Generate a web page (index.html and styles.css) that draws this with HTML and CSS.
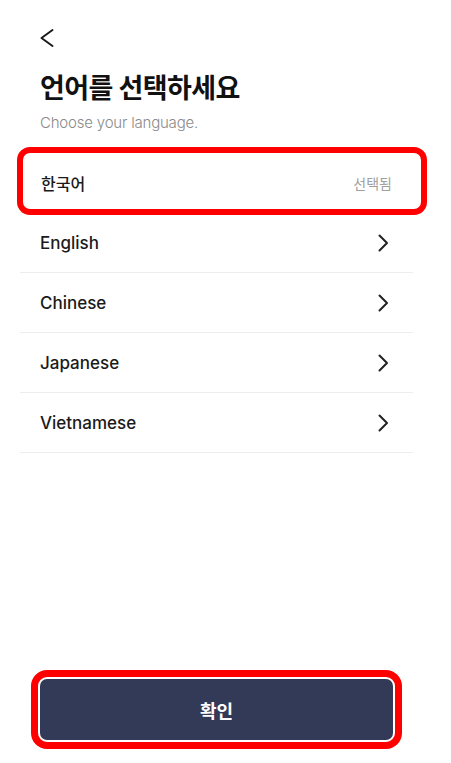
FILE: index.html
```html
<!DOCTYPE html>
<html lang="ko">
<head>
<meta charset="utf-8">
<title>언어 선택</title>
<link rel="stylesheet" href="styles.css">
</head>
<body>
<div class="page">
  <header class="header">
    <button class="back" aria-label="뒤로">
      <svg width="16" height="20" viewBox="0 0 16 20"><path d="M13.5 2 L2.5 10 L13.5 18" fill="none" stroke="#1a1a1a" stroke-width="2" stroke-linecap="round" stroke-linejoin="round"/></svg>
    </button>
  </header>
  <h1 class="title">언어를 선택하세요</h1>
  <p class="subtitle">Choose your language.</p>
  <div class="list">
    <div class="row row-selected">
      <span class="label label-ko">한국어</span>
      <span class="status">선택됨</span>
    </div>
    <div class="row">
      <span class="label">English</span>
      <svg class="chev" width="12" height="18" viewBox="0 0 12 18"><path d="M2.5 1.5 L10 9 L2.5 16.5" fill="none" stroke="#222" stroke-width="2" stroke-linecap="round" stroke-linejoin="round"/></svg>
    </div>
    <div class="row">
      <span class="label">Chinese</span>
      <svg class="chev" width="12" height="18" viewBox="0 0 12 18"><path d="M2.5 1.5 L10 9 L2.5 16.5" fill="none" stroke="#222" stroke-width="2" stroke-linecap="round" stroke-linejoin="round"/></svg>
    </div>
    <div class="row">
      <span class="label">Japanese</span>
      <svg class="chev" width="12" height="18" viewBox="0 0 12 18"><path d="M2.5 1.5 L10 9 L2.5 16.5" fill="none" stroke="#222" stroke-width="2" stroke-linecap="round" stroke-linejoin="round"/></svg>
    </div>
    <div class="row">
      <span class="label">Vietnamese</span>
      <svg class="chev" width="12" height="18" viewBox="0 0 12 18"><path d="M2.5 1.5 L10 9 L2.5 16.5" fill="none" stroke="#222" stroke-width="2" stroke-linecap="round" stroke-linejoin="round"/></svg>
    </div>
    <div class="highlight"></div>
  </div>
  <footer class="footer">
    <button class="confirm">확인</button>
  </footer>
</div>
</body>
</html>
```

FILE: styles.css
```css
* { box-sizing: border-box; }
html, body { margin: 0; padding: 0; background: #fff; }
body {
  font-family: Inter, "Noto Sans CJK KR", sans-serif;
  color: #1a1a1a;
}
.page {
  display: flex;
  flex-direction: column;
  min-height: 763px;
}
.header {
  padding: 28px 0 0 39px;
  height: 71px;
}
.back {
  display: block;
  padding: 0;
  border: 0;
  background: none;
  width: 16px;
  height: 20px;
}
.back svg { display: block; }
.title {
  margin: 0 0 0 40px;
  font-size: 27px;
  line-height: 35px;
  font-weight: 700;
  letter-spacing: -0.6px;
  color: #111;
}
.subtitle {
  margin: 7px 0 0 40px;
  font-size: 15px;
  line-height: 20px;
  font-weight: 300;
  letter-spacing: -0.2px;
  color: #8a8a8a;
}
.list {
  position: relative;
  margin: 20px 0 0 20px;
  width: 393px;
}
.row {
  display: flex;
  align-items: center;
  justify-content: space-between;
  height: 60px;
  padding: 0 24px 0 20px;
  border-bottom: 1px solid #eeeeee;
}
.label {
  font-size: 17px;
  font-weight: 500;
  color: #1a1a1a;
}
.label-ko {
  font-size: 16px;
  padding-left: 1px;
}
.status {
  font-size: 14px;
  color: #a0a0a0;
  margin-right: -3px;
}
.chev { display: block; }
.highlight {
  position: absolute;
  left: -3px;
  top: -6px;
  width: 410px;
  height: 68px;
  border: 6px solid #ff0000;
  border-radius: 13px;
  pointer-events: none;
}
.footer {
  margin-top: auto;
  padding: 0 58px 23px 40px;
}
.confirm {
  display: block;
  width: 100%;
  height: 61px;
  border: 0;
  border-radius: 7px;
  background: #323a58;
  color: #fff;
  font-family: Inter, "Noto Sans CJK KR", sans-serif;
  font-size: 18px;
  font-weight: 700;
  outline: 7px solid #ff0000;
  outline-offset: 2px;
}
```
